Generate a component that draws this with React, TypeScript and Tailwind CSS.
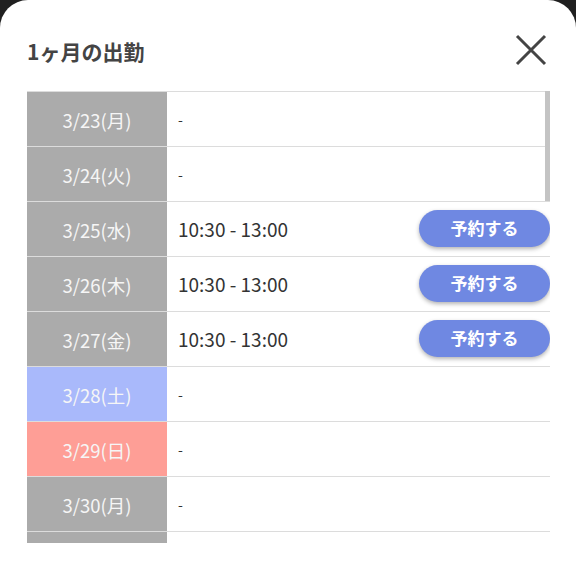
import React from "react";

type Row = { date: string; kind: "normal" | "sat" | "sun"; time?: string };

const rows: Row[] = [
  { date: "3/23(月)", kind: "normal" },
  { date: "3/24(火)", kind: "normal" },
  { date: "3/25(水)", kind: "normal", time: "10:30 - 13:00" },
  { date: "3/26(木)", kind: "normal", time: "10:30 - 13:00" },
  { date: "3/27(金)", kind: "normal", time: "10:30 - 13:00" },
  { date: "3/28(土)", kind: "sat" },
  { date: "3/29(日)", kind: "sun" },
  { date: "3/30(月)", kind: "normal" },
  { date: "3/31(火)", kind: "normal" },
];

const bgFor = (k: Row["kind"]) =>
  k === "sat" ? "bg-[#a9b9fb]" : k === "sun" ? "bg-[#fe9e96]" : "bg-[#ababab]";

export default function App() {
  return (
    <div
      className="h-[581px] w-[576px] bg-[#202020] overflow-hidden"
      style={{ fontFamily: '"Noto Sans CJK JP", "Noto Sans", sans-serif' }}
    >
      <div className="h-full w-full bg-white rounded-t-[28px] pt-[31px]">
        <div className="flex items-center justify-between pl-[27px] pr-[28px] h-[40px]">
          <h1 className="text-[21px] font-bold text-[#444] leading-none">1ヶ月の出勤</h1>
          <svg width="34" height="34" viewBox="0 0 34 34" className="mt-[-2px]">
            <path d="M3 3 L31 31 M31 3 L3 31" stroke="#444" strokeWidth="3" strokeLinecap="butt" />
          </svg>
        </div>
        <div className="relative ml-[27px] mt-[20px] w-[523px] h-[452px] overflow-hidden">
          <div className="flex flex-col border-t border-[#dcdcdc]">
            {rows.map((r) => (
              <div key={r.date} className="flex h-[55px] border-b border-[#dcdcdc] shrink-0">
                <div
                  className={`${bgFor(r.kind)} w-[140px] flex items-center justify-center text-[18.5px] text-[#f6f6f6] pt-[3px]`}
                >
                  {r.date}
                </div>
                <div className="flex-1 flex items-center justify-between pl-[11px]">
                  {r.time ? (
                    <>
                      <span className="text-[19px] text-[#333] pt-[1px]">{r.time}</span>
                      <button className="h-[37px] w-[131px] mt-[-2px] rounded-full bg-[#6f88e2] text-white text-[17px] font-bold shadow-[0_2px_4px_rgba(0,0,0,0.3)]">
                        予約する
                      </button>
                    </>
                  ) : (
                    <span className="text-[14px] text-[#333]">-</span>
                  )}
                </div>
              </div>
            ))}
          </div>
          <div className="absolute right-0 top-0 w-[5px] h-[110px] bg-[#c4c4c4]" />
        </div>
      </div>
    </div>
  );
}
